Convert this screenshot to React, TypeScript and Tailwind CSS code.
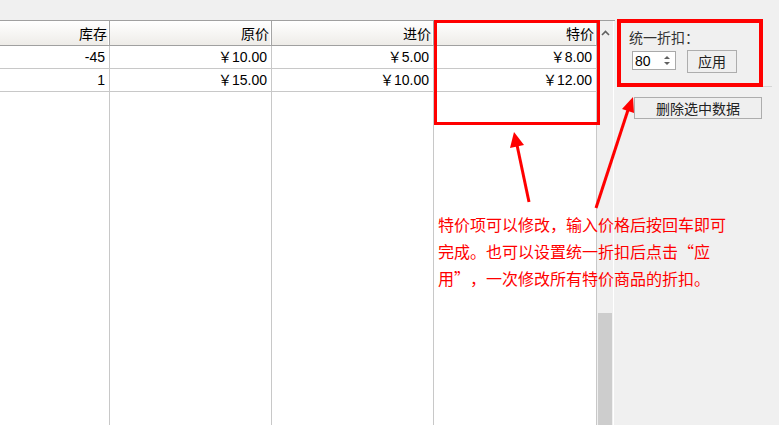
import React from "react";

const font = { fontFamily: '"Liberation Sans", "Noto Sans CJK SC", sans-serif' };
const cjk = { fontFamily: '"Noto Sans CJK SC", "Liberation Sans", sans-serif' };

const cols = [
  { key: "stock", title: "库存", w: "w-[110px]", vals: ["-45", "1"] },
  { key: "orig", title: "原价", w: "w-[162px]", vals: ["￥10.00", "￥15.00"] },
  { key: "cost", title: "进价", w: "w-[162px]", vals: ["￥5.00", "￥10.00"] },
  { key: "sale", title: "特价", w: "w-[163px]", vals: ["￥8.00", "￥12.00"] },
];

function Column({ c }: { c: (typeof cols)[number] }) {
  return (
    <div className={`${c.w} flex flex-col h-full`}>
      <div className="h-[25px] flex items-center justify-end pr-[2px] text-[14px] text-black bg-linear-to-b from-white to-[#eeece8] border-b border-[#a0a0a0] border-r border-r-[#a5a5a5] shadow-[inset_-1px_0_0_#ffffff]" style={cjk}>
        {c.title}
      </div>
      {c.vals.map((v, i) => (
        <div key={i} className="h-[23px] flex items-center justify-end pr-[4px] text-[14px] text-black bg-white border-b border-r border-[#c8c8c8]">
          {v}
        </div>
      ))}
      <div className="flex-1 bg-white border-r border-[#c8c8c8]" />
    </div>
  );
}

const lines = [
  "特价项可以修改，输入价格后按回车即可",
  "完成。也可以设置统一折扣后点击“应",
  "用”，一次修改所有特价商品的折扣。",
];

function Line({ text }: { text: string }) {
  return (
    <div className="flex">
      {Array.from(text).map((ch, i) => (
        <span key={i} className={`inline-block w-[16px] ${ch === "“" ? "text-right" : "text-left"}`}>
          {ch}
        </span>
      ))}
    </div>
  );
}

export default function App() {
  return (
    <div lang="zh-CN" className="relative w-[779px] h-[425px] overflow-hidden bg-[#f0f0f0] flex" style={font}>
      {/* table + scrollbar */}
      <div className="w-[615px] h-full flex flex-col pt-[20px]">
        <div className="flex-1 flex border-t border-[#a0a0a0] min-h-0">
          <div className="flex h-full">
            {cols.map((c) => (
              <Column key={c.key} c={c} />
            ))}
          </div>
          {/* scrollbar */}
          <div className="w-[17px] h-full flex flex-col bg-[#f0f0f0] border-r border-white">
            <div className="h-[17px] flex items-center justify-center pt-[6px]">
              <svg width="9" height="6" viewBox="0 0 9 6">
                <polyline points="1,5 4.5,1.5 8,5" fill="none" stroke="#606060" strokeWidth="1.6" />
              </svg>
            </div>
            <div className="flex-1 px-[1px] flex flex-col">
              <div className="h-[275px]" />
              <div className="flex-1 bg-[#cdcdcd]" />
            </div>
          </div>
        </div>
      </div>

      {/* right panel */}
      <div className="flex-1 h-full flex flex-col text-[#333333]" style={cjk}>
        <div className="ml-[2px] w-[155px] h-[87px] border-b border-[#d5d5d5] pt-[27px] pl-[12px]">
          <div className="text-[14px] leading-[20px] whitespace-nowrap">
            统一折扣<span className="inline-block w-[14px] text-center">：</span>
          </div>
          <div className="flex items-start mt-[3px] pl-[3px] gap-[11px]">
            <div className="mt-[1px] w-[44px] h-[19px] bg-white border border-[#a9a9a9] flex items-center justify-between pl-[2px] pr-[5px] text-[14px] text-black" style={font}>
              <span className="leading-none">80</span>
              <svg width="6" height="11" viewBox="0 0 6 11">
                <polygon points="0,4 3,1 6,4" fill="#606060" />
                <polygon points="0,7 3,10 6,7" fill="#606060" />
              </svg>
            </div>
            <div className="w-[50px] h-[23px] bg-[#efefef] border border-[#adadad] flex items-center justify-center text-[14px] text-[#222222]">
              应用
            </div>
          </div>
        </div>
        <div className="mt-[10px] ml-[19px] w-[128px] h-[22px] bg-[#efefef] border border-[#adadad] flex items-center justify-center text-[14px] text-[#222222]">
          删除选中数据
        </div>
      </div>

      {/* annotation overlays */}
      <div className="absolute left-[434px] top-[20px] w-[166px] h-[105px] border-[3px] border-[#ff0000]" />
      <div className="absolute left-[617px] top-[19px] w-[146px] h-[68px] border-[4px] border-[#ff0000]" />
      <svg className="absolute left-0 top-0" width="779" height="425" viewBox="0 0 779 425">
        <line x1="529" y1="202" x2="517" y2="145" stroke="#ff0000" strokeWidth="3" />
        <polygon points="514,132 524,145 510,148" fill="#ff0000" />
        <line x1="596" y1="208" x2="628" y2="110" stroke="#ff0000" strokeWidth="3" />
        <polygon points="633,97 634,113 622,109" fill="#ff0000" />
      </svg>
      <div className="absolute left-[438px] top-[211px] text-[16px] leading-[27px] text-[#ff0000] whitespace-nowrap" style={cjk}>
        {lines.map((l, i) => (
          <Line key={i} text={l} />
        ))}
      </div>
    </div>
  );
}
